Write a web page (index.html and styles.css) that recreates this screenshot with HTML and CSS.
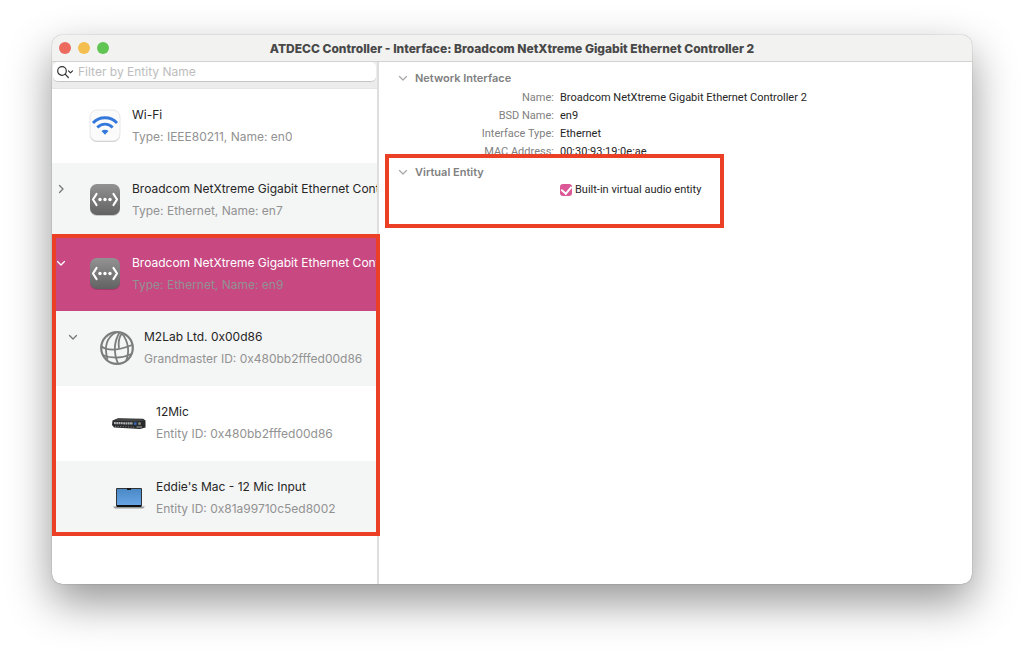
FILE: index.html
```html
<!DOCTYPE html>
<html lang="en">
<head>
    <meta charset="UTF-8">
    <meta name="viewport" content="width=device-width, initial-scale=1.0">
    <title>ATDECC Controller</title>
    <link rel="stylesheet" href="styles.css">
</head>
<body>
    <!-- Shared icons -->
    <svg class="defs" width="0" height="0">
        <defs>
            <linearGradient id="greyTile" x1="0" y1="0" x2="0" y2="1">
                <stop offset="0" stop-color="#929292"/>
                <stop offset="1" stop-color="#626262"/>
            </linearGradient>
            <linearGradient id="screen" x1="0" y1="0" x2="0" y2="1">
                <stop offset="0" stop-color="#4b88c6"/>
                <stop offset="1" stop-color="#66a5e5"/>
            </linearGradient>
            <symbol id="ethernet" viewBox="0 0 36 36">
                <rect x="3" y="3" width="30" height="31" rx="7" fill="#000" opacity=".18"/>
                <rect x="3" y="2" width="30" height="31" rx="7" fill="url(#greyTile)"/>
                <path d="M9.500 12 L6 17.500 L9.500 23 M26.500 12 L30 17.500 L26.500 23" fill="none" stroke="#fff" stroke-width="2.200" stroke-linecap="round" stroke-linejoin="round"/>
                <circle cx="13" cy="17.500" r="1.700" fill="#fff"/>
                <circle cx="18" cy="17.500" r="1.700" fill="#fff"/>
                <circle cx="23" cy="17.500" r="1.700" fill="#fff"/>
            </symbol>
            <symbol id="down" viewBox="0 0 10 10">
                <path d="M1.500 3.500 L5 7 L8.500 3.500" fill="none" stroke="currentColor" stroke-width="1.300" stroke-linecap="round" stroke-linejoin="round"/>
            </symbol>
        </defs>
    </svg>

    <div class="window">
        <!-- Title bar -->
        <header class="titlebar">
            <div class="lights">
                <button type="button" class="light close" aria-label="Close"></button>
                <button type="button" class="light minimize" aria-label="Minimize"></button>
                <button type="button" class="light zoom" aria-label="Zoom"></button>
            </div>
            <h1>ATDECC Controller - Interface: Broadcom NetXtreme Gigabit Ethernet Controller 2</h1>
        </header>

        <div class="content">
            <!-- Entity list -->
            <aside class="sidebar">
                <form class="search">
                    <label class="search-box">
                        <svg width="18" height="14" viewBox="0 0 18 14" fill="none" stroke="#333" stroke-width="1.200" stroke-linecap="round" stroke-linejoin="round">
                            <circle cx="5" cy="6" r="4.300"/>
                            <path d="M8.200 9.200 L11.300 12.500 M11.500 5.800 L13.500 7.800 L15.500 5.800"/>
                        </svg>
                        <input type="text" placeholder="Filter by Entity Name" aria-label="Filter by Entity Name">
                    </label>
                </form>

                <div class="row">
                    <span class="arrow"></span>
                    <svg class="icon" viewBox="0 0 36 36">
                        <rect x="3" y="3" width="30" height="31" rx="7" fill="#c8c8c8"/>
                        <rect x="3" y="2" width="30" height="31" rx="7" fill="#fbfbfb" stroke="#e2e2e2" stroke-width=".8"/>
                        <g fill="none" stroke="#3478dc" stroke-width="2.800">
                            <path d="M6 15 C12 8 24 8 30 15"/>
                            <path d="M10.300 19.500 C14.500 15 21.500 15 25.700 19.500"/>
                        </g>
                        <path d="M14.500 23 C16.500 21.200 19.500 21.200 21.500 23 L18 26.700 Z" fill="#3478dc"/>
                    </svg>
                    <div class="text">
                        <div class="name">Wi-Fi</div>
                        <div class="detail">Type: IEEE80211, Name: en0</div>
                    </div>
                </div>

                <div class="row shaded">
                    <button type="button" class="arrow closed" aria-label="Expand"><svg viewBox="0 0 10 10"><use href="#down"/></svg></button>
                    <svg class="icon"><use href="#ethernet"/></svg>
                    <div class="text">
                        <div class="name">Broadcom NetXtreme Gigabit Ethernet Controller</div>
                        <div class="detail">Type: Ethernet, Name: en7</div>
                    </div>
                </div>

                <div class="marked-rows">
                    <div class="row selected">
                        <button type="button" class="arrow" aria-label="Collapse"><svg viewBox="0 0 10 10"><use href="#down"/></svg></button>
                        <svg class="icon"><use href="#ethernet"/></svg>
                        <div class="text">
                            <div class="name">Broadcom NetXtreme Gigabit Ethernet Controller 2</div>
                            <div class="detail">Type: Ethernet, Name: en9</div>
                        </div>
                    </div>

                    <div class="row shaded level-1">
                        <button type="button" class="arrow" aria-label="Collapse"><svg viewBox="0 0 10 10"><use href="#down"/></svg></button>
                        <svg class="icon" viewBox="0 0 36 36" fill="none" stroke="#7b7d7c" stroke-width="1.800">
                            <circle cx="18" cy="18" r="15.800" stroke-width="2.200"/>
                            <path d="M17 2.500 C8 7 4.500 15 8.500 29.500"/>
                            <path d="M20.500 2.500 C15 12 14.500 23 19 33.500"/>
                            <path d="M23 3 C19.500 8 19 12 20 18"/>
                            <path d="M23 3.500 C30 12 30.500 23 27 31"/>
                            <path d="M2.500 16.500 C8 20.500 18 21 33 15"/>
                            <path d="M3.500 25 C14 29 24 28 32.500 24"/>
                        </svg>
                        <div class="text">
                            <div class="name">M2Lab Ltd. 0x00d86</div>
                            <div class="detail">Grandmaster ID: 0x480bb2fffed00d86</div>
                        </div>
                    </div>

                    <div class="row level-2">
                        <span class="arrow"></span>
                        <svg class="icon" viewBox="0 0 36 36">
                            <path d="M1.500 15.500 L7 13.200 L32 13.800 L34.500 15.500 L34.500 22.500 L29 24 L3 22.500 L1 20 Z" fill="#292a2b"/>
                            <path d="M2 15.500 L7 13.700 L31 14.200 L34 15.500 L24 16.500 Z" fill="#444546"/>
                            <path d="M3 18 L22 18.500" stroke="#b0b4b7" stroke-width="2.200" stroke-dasharray="1.800 .5"/>
                            <path d="M4 21.300 L23 22.200" stroke="#8b8d8e" stroke-width="1" stroke-dasharray="1 1.600"/>
                            <rect x="23" y="17.300" width="2.600" height="2.600" fill="#3863b5"/>
                            <circle cx="28.500" cy="18.500" r="1.500" fill="#858778"/>
                            <path d="M25.500 22 L31 22" stroke="#939595" stroke-width="1.200"/>
                        </svg>
                        <div class="text">
                            <div class="name">12Mic</div>
                            <div class="detail">Entity ID: 0x480bb2fffed00d86</div>
                        </div>
                    </div>

                    <div class="row shaded level-2">
                        <span class="arrow"></span>
                        <svg class="icon" viewBox="0 0 36 36">
                            <rect x="5" y="8" width="26" height="19" rx="1" fill="#303437"/>
                            <rect x="6" y="9" width="24" height="16" fill="url(#screen)"/>
                            <rect x="16" y="8" width="4" height="2" fill="#17191a"/>
                            <path d="M2 26.500 H34 L32 28.500 H4 Z" fill="#96999a"/>
                            <path d="M6 25 H30 V27 H6 Z" fill="#111"/>
                        </svg>
                        <div class="text">
                            <div class="name">Eddie's Mac - 12 Mic Input</div>
                            <div class="detail">Entity ID: 0x81a99710c5ed8002</div>
                        </div>
                    </div>
                </div>
            </aside>

            <!-- Details of the selected interface -->
            <main class="details">
                <section>
                    <h2><svg viewBox="0 0 10 10"><use href="#down"/></svg>Network Interface</h2>
                    <dl>
                        <dt>Name:</dt>
                        <dd>Broadcom NetXtreme Gigabit Ethernet Controller 2</dd>
                        <dt>BSD Name:</dt>
                        <dd>en9</dd>
                        <dt>Interface Type:</dt>
                        <dd>Ethernet</dd>
                        <dt>MAC Address:</dt>
                        <dd>00:30:93:19:0e:ae</dd>
                    </dl>
                </section>
                <section class="marked-section">
                    <h2><svg viewBox="0 0 10 10"><use href="#down"/></svg>Virtual Entity</h2>
                    <label class="check">
                        <input type="checkbox" checked>
                        <span>Built-in virtual audio entity</span>
                    </label>
                </section>
            </main>
        </div>
    </div>
</body>
</html>
```

FILE: styles.css
```css
* {
    box-sizing: border-box;
}

body {
    display: flex;
    min-height: 100vh;
    margin: 0;
    padding: 35px 52px 69px;
    background-color: #fff;
    color: #262626;
    font-family: Inter, "Liberation Sans", sans-serif;
    font-size: 12px;
    overflow: hidden;
}

.defs {
    position: absolute;
}

button {
    padding: 0;
    border: none;
    background: none;
    color: inherit;
}

.window {
    display: flex;
    flex: 1;
    flex-direction: column;
    min-width: 0;
    border-radius: 10px;
    background-color: #fff;
    box-shadow: 0 0 1px rgba(0, 0, 0, 0.6), 0 18px 44px rgba(0, 0, 0, 0.42);
    overflow: hidden;
}

/* Title bar */
.titlebar {
    display: grid;
    grid-template-columns: 60px 1fr 60px;
    align-items: center;
    height: 27px;
    border-bottom: 1px solid #d2d2d2;
    background-color: #f2f2f0;
}

.lights {
    display: flex;
    gap: 7px;
    padding-left: 7px;
}

.light {
    flex: none;
    width: 12px;
    height: 12px;
    border-radius: 50%;
}

.close {
    background-color: #ed6a5e;
}

.minimize {
    background-color: #f5bf4f;
}

.zoom {
    background-color: #61c554;
}

h1 {
    margin: 0;
    color: #484848;
    font-size: 12px;
    font-weight: 800;
    text-align: center;
    white-space: nowrap;
}

.content {
    display: flex;
    flex: 1;
}

/* Sidebar */
.sidebar {
    flex: none;
    width: 327px;
    border-right: 2px solid #dedede;
}

.search {
    height: 27px;
    padding: 0 1px;
    border-bottom: 1px solid #e4e4e4;
    background-color: #ececec;
}

.search-box {
    display: flex;
    align-items: center;
    gap: 3px;
    height: 20px;
    padding-left: 4px;
    border-bottom: 1px solid #c4c4c4;
    border-radius: 5px;
    background-color: #fff;
}

.search-box input {
    flex: 1;
    min-width: 0;
    padding: 0;
    border: none;
    outline: none;
    background: none;
    font: inherit;
}

.search-box input::placeholder {
    color: #bdbdbd;
}

.row {
    display: flex;
    align-items: flex-start;
    height: 74px;
    padding-left: 4px;
    background-color: #fff;
}

.shaded {
    background-color: #f4f5f5;
}

.selected {
    background-color: #c84882;
    color: #fff;
}

.level-1 {
    height: 75px;
    padding-left: 16px;
}

.level-2 {
    height: 75px;
    padding-left: 28px;
}

.arrow {
    flex: none;
    width: 10px;
    height: 10px;
    margin-top: 21px;
    color: #777;
}

.arrow svg {
    display: block;
    width: 10px;
    height: 10px;
}

.closed {
    transform: rotate(-90deg);
}

.selected .arrow {
    color: #fff;
}

.icon {
    flex: none;
    width: 36px;
    height: 36px;
    margin: 19px 9px 0 21px;
}

.text {
    min-width: 0;
    padding-top: 15px;
    line-height: 22px;
    white-space: nowrap;
    overflow: hidden;
}

.detail {
    color: #929292;
}

/* Highlight frame over the selected branch */
.marked-rows {
    position: relative;
}

.marked-rows::after {
    content: "";
    position: absolute;
    inset: -3px -3px 0 0;
    z-index: 1;
    border: 4px solid #eb4026;
    pointer-events: none;
}

/* Details pane */
.details {
    flex: 1;
    min-width: 0;
    padding-top: 7px;
    font-family: Roboto, "Liberation Sans", sans-serif;
    font-size: 11px;
    line-height: 18px;
}

h2 {
    display: flex;
    align-items: center;
    gap: 7px;
    margin: 0;
    padding-left: 19px;
    color: #808080;
    font-family: Inter, "Liberation Sans", sans-serif;
    font-size: 11px;
    font-weight: 600;
    line-height: 18px;
}

h2 svg {
    width: 10px;
    height: 10px;
    color: #a8a8a8;
}

dl {
    display: grid;
    grid-template-columns: 175px 1fr;
    column-gap: 6px;
    margin: 0;
    padding-top: 2px;
}

dt {
    color: #808080;
    text-align: right;
}

dd {
    margin: 0;
}

.marked-section {
    position: relative;
    max-width: 339px;
    height: 74px;
    margin: -7px 6px 0;
    padding-top: 5px;
    border: 4px solid #eb4026;
    background-color: #fff;
}

.marked-section h2 {
    padding-left: 9px;
}

.check {
    display: flex;
    align-items: center;
    gap: 3px;
    padding-left: 171px;
}

.check input {
    display: grid;
    place-items: center;
    appearance: none;
    width: 12px;
    height: 12px;
    margin: 0;
    border-radius: 3px;
    background-color: #db5795;
}

.check input:checked::before {
    content: "";
    width: 5px;
    height: 8px;
    margin-bottom: 2px;
    border: solid #fff;
    border-width: 0 2px 2px 0;
    transform: rotate(40deg);
}
```
